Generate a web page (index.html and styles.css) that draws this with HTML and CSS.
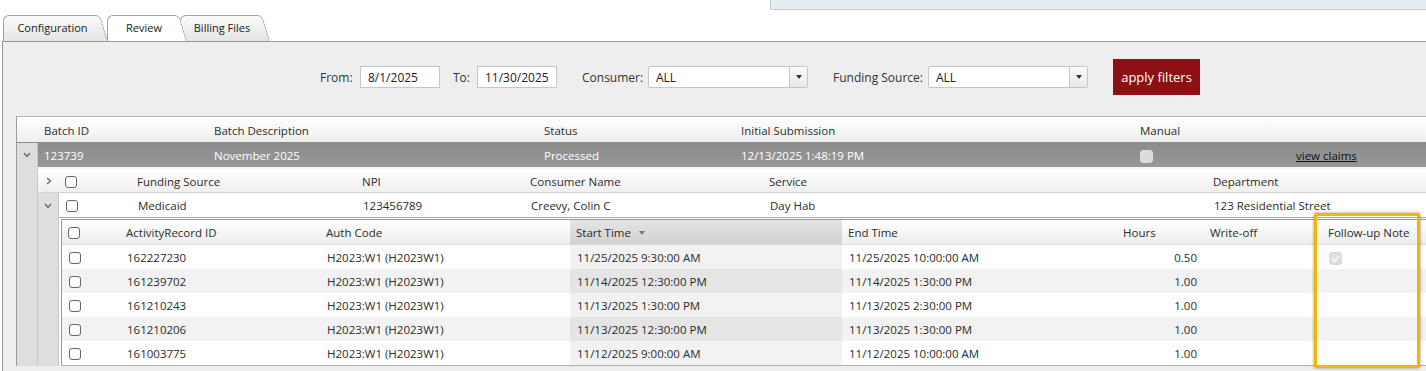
FILE: index.html
```html
<!DOCTYPE html>
<html lang="en">
<head>
    <meta charset="UTF-8">
    <meta name="viewport" content="width=device-width, initial-scale=1.0">
    <title>Billing - Review</title>
    <link rel="stylesheet" href="styles.css">
</head>
<body>
    <div class="top-strip">
        <div class="notice-box"></div>
    </div>

    <div class="tabstrip">
        <div class="tab tab-config"><span>Configuration</span></div>
        <div class="tab tab-review active"><span>Review</span></div>
        <div class="tab tab-billing"><span>Billing Files</span></div>
    </div>

    <div class="panel">
        <div class="filters">
            <label class="filter-label label-from">From:</label>
            <input class="text-input" type="text" value="8/1/2025">
            <label class="filter-label label-to">To:</label>
            <input class="text-input" type="text" value="11/30/2025">
            <label class="filter-label label-consumer">Consumer:</label>
            <div class="dropdown"><span class="value">ALL</span><span class="arrow"></span></div>
            <label class="filter-label label-funding">Funding Source:</label>
            <div class="dropdown"><span class="value">ALL</span><span class="arrow"></span></div>
            <button class="apply-btn" type="button">apply filters</button>
        </div>

        <div class="grid">
            <table class="batch-table">
                <colgroup>
                    <col style="width:21px"><col style="width:170px"><col style="width:330px"><col style="width:197px">
                    <col style="width:399px"><col style="width:156px"><col style="width:146px">
                </colgroup>
                <thead>
                    <tr>
                        <th></th>
                        <th>Batch ID</th>
                        <th>Batch Description</th>
                        <th>Status</th>
                        <th>Initial Submission</th>
                        <th>Manual</th>
                        <th></th>
                    </tr>
                </thead>
                <tbody>
                    <tr class="batch-row">
                        <td class="hier"><svg class="chev" width="8" height="6" viewBox="0 0 8 6"><polyline points="1,1 4,4.5 7,1"/></svg></td>
                        <td>123739</td>
                        <td>November 2025</td>
                        <td>Processed</td>
                        <td>12/13/2025 1:48:19 PM</td>
                        <td><span class="cb cb-disabled"></span></td>
                        <td><a class="view-link" href="#">view claims</a></td>
                    </tr>
                    <tr class="detail-row">
                        <td class="hier"></td>
                        <td colspan="6" class="detail-cell">
                            <table class="source-table">
                                <colgroup>
                                    <col style="width:21px"><col style="width:72px"><col style="width:225px"><col style="width:168px">
                                    <col style="width:239px"><col style="width:444px"><col style="width:230px">
                                </colgroup>
                                <thead>
                                    <tr>
                                        <th class="hier-head"><svg class="chev" width="6" height="8" viewBox="0 0 6 8"><polyline points="1,1 4.5,4 1,7"/></svg></th>
                                        <th><span class="cb"></span></th>
                                        <th>Funding Source</th>
                                        <th>NPI</th>
                                        <th>Consumer Name</th>
                                        <th>Service</th>
                                        <th>Department</th>
                                    </tr>
                                </thead>
                                <tbody>
                                    <tr class="source-row">
                                        <td class="hier"><svg class="chev" width="8" height="6" viewBox="0 0 8 6"><polyline points="1,1 4,4.5 7,1"/></svg></td>
                                        <td><span class="cb"></span></td>
                                        <td>Medicaid</td>
                                        <td>123456789</td>
                                        <td>Creevy, Colin C</td>
                                        <td>Day Hab</td>
                                        <td>123 Residential Street</td>
                                    </tr>
                                    <tr class="detail-row">
                                        <td class="hier"></td>
                                        <td colspan="6" class="detail-cell inner">
                                            <div class="records">
                                                <table class="records-table">
                                                    <colgroup>
                                                        <col style="width:58px"><col style="width:200px"><col style="width:250px"><col style="width:272px">
                                                        <col style="width:275px"><col style="width:87px"><col style="width:118px"><col style="width:115px">
                                                    </colgroup>
                                                    <thead>
                                                        <tr>
                                                            <th><span class="cb"></span></th>
                                                            <th>ActivityRecord ID</th>
                                                            <th>Auth Code</th>
                                                            <th class="sorted">Start Time <span class="sort-arrow"></span></th>
                                                            <th>End Time</th>
                                                            <th>Hours</th>
                                                            <th>Write-off</th>
                                                            <th>Follow-up Note</th>
                                                        </tr>
                                                    </thead>
                                                    <tbody>
                                                        <tr>
                                                            <td><span class="cb"></span></td>
                                                            <td>162227230</td>
                                                            <td>H2023:W1 (H2023W1)</td>
                                                            <td class="sorted">11/25/2025 9:30:00 AM</td>
                                                            <td>11/25/2025 10:00:00 AM</td>
                                                            <td class="num">0.50</td>
                                                            <td></td>
                                                            <td><span class="cb cb-checked"><svg width="9" height="8" viewBox="0 0 9 8"><polyline points="1,4 3.5,6.5 8,1"/></svg></span></td>
                                                        </tr>
                                                        <tr class="alt">
                                                            <td><span class="cb"></span></td>
                                                            <td>161239702</td>
                                                            <td>H2023:W1 (H2023W1)</td>
                                                            <td class="sorted">11/14/2025 12:30:00 PM</td>
                                                            <td>11/14/2025 1:30:00 PM</td>
                                                            <td class="num">1.00</td>
                                                            <td></td>
                                                            <td></td>
                                                        </tr>
                                                        <tr>
                                                            <td><span class="cb"></span></td>
                                                            <td>161210243</td>
                                                            <td>H2023:W1 (H2023W1)</td>
                                                            <td class="sorted">11/13/2025 1:30:00 PM</td>
                                                            <td>11/13/2025 2:30:00 PM</td>
                                                            <td class="num">1.00</td>
                                                            <td></td>
                                                            <td></td>
                                                        </tr>
                                                        <tr class="alt">
                                                            <td><span class="cb"></span></td>
                                                            <td>161210206</td>
                                                            <td>H2023:W1 (H2023W1)</td>
                                                            <td class="sorted">11/13/2025 12:30:00 PM</td>
                                                            <td>11/13/2025 1:30:00 PM</td>
                                                            <td class="num">1.00</td>
                                                            <td></td>
                                                            <td></td>
                                                        </tr>
                                                        <tr>
                                                            <td><span class="cb"></span></td>
                                                            <td>161003775</td>
                                                            <td>H2023:W1 (H2023W1)</td>
                                                            <td class="sorted">11/12/2025 9:00:00 AM</td>
                                                            <td>11/12/2025 10:00:00 AM</td>
                                                            <td class="num">1.00</td>
                                                            <td></td>
                                                            <td></td>
                                                        </tr>
                                                    </tbody>
                                                </table>
                                                <!-- highlight around the follow-up column -->
                                                <div class="column-highlight"></div>
                                            </div>
                                        </td>
                                    </tr>
                                </tbody>
                            </table>
                        </td>
                    </tr>
                </tbody>
            </table>
        </div>
    </div>
</body>
</html>
```

FILE: styles.css
```css
:root {
    --line: #a3a3a3;
    --hier-bg: #dedede;
    --text: #2b2b2b;
    --alt-row: #f2f2f2;
    --brand-red: #8e1015;
}

body {
    margin: 0;
    background: #fff;
    color: var(--text);
    font-family: "Open Sans", "Noto Sans", sans-serif;
    font-size: 11.5px;
    overflow: hidden;
}

/* ---------- top strip + tabs ---------- */

.top-strip {
    height: 15px;
    display: flex;
    justify-content: flex-end;
}

.notice-box {
    width: 655px;
    height: 9px;
    background: #e4eef0;
    border-left: 1px solid #c9c9c9;
    border-bottom: 1px solid #c9c9c9;
}

.tabstrip {
    display: flex;
    align-items: flex-end;
    height: 26px;
    padding-left: 3px;
}

.tab {
    position: relative;
    z-index: 1;
    height: 26px;
    line-height: 26px;
    box-sizing: border-box;
    padding-right: 6px;
    text-align: center;
    font-size: 11px;
    color: #222;
}

.tab span {
    position: relative;
    z-index: 1;
}

.tab::before {
    content: "";
    position: absolute;
    left: 0;
    top: 0;
    bottom: 0;
    right: 14px;
    border: 1px solid var(--line);
    border-width: 1px 0 0 1px;
    border-radius: 6px 0 0 0;
    background: linear-gradient(#fbfbfb, #e4e4e4);
}

.tab::after {
    content: "";
    position: absolute;
    top: 0;
    bottom: 0;
    right: 0;
    width: 20px;
    border: 1px solid var(--line);
    border-width: 1px 1px 0 0;
    border-radius: 0 5px 0 0;
    background: linear-gradient(#fbfbfb, #e4e4e4);
    transform: skewX(17deg);
    transform-origin: 0 100%;
}

.tab.active {
    z-index: 2;
}

.tab.active::before,
.tab.active::after {
    background: #fff;
}

.tab-config { width: 105px; }
.tab-review { width: 80px; margin-left: -1px; }
.tab-billing { width: 90px; margin-left: -7px; }

/* ---------- panel + filters ---------- */

.panel {
    margin-left: 2px;
    height: 330px;
    border-top: 1px solid #999;
    border-left: 1px solid #999;
    background: #eee;
    overflow: hidden;
}

.filters {
    display: flex;
    align-items: center;
    height: 36px;
    margin-top: 17px;
    padding-left: 317px;
    font-size: 12px;
}

.filter-label {
    flex: none;
    color: #333;
}

.label-from { width: 40px; }
.label-to { width: 24px; margin-left: 13px; }
.label-consumer { width: 66px; margin-left: 25px; }
.label-funding { width: 95px; margin-left: 25px; }

.text-input {
    width: 80px;
    height: 22px;
    box-sizing: border-box;
    padding: 0 7px;
    border: 1px solid #c6c6c6;
    background: #fff;
    color: #222;
    font: inherit;
    outline: none;
}

.dropdown {
    display: flex;
    width: 160px;
    height: 22px;
    box-sizing: border-box;
    border: 1px solid #c6c6c6;
    border-radius: 2px;
    background: #fff;
}

.dropdown .value {
    flex: 1;
    padding-left: 7px;
    line-height: 21px;
    color: #222;
}

.dropdown .arrow {
    width: 17px;
    display: flex;
    align-items: center;
    justify-content: center;
    border-left: 1px solid #c6c6c6;
    background: linear-gradient(#fafafa, #e9e9e9);
}

.dropdown .arrow::after {
    content: "";
    border-left: 3.5px solid transparent;
    border-right: 3.5px solid transparent;
    border-top: 4px solid #333;
}

.apply-btn {
    margin-left: 25px;
    width: 87px;
    height: 36px;
    padding: 0;
    border: 0;
    background: var(--brand-red);
    color: #fff;
    font-family: inherit;
    font-size: 13px;
    white-space: nowrap;
    cursor: pointer;
}

/* ---------- grids ---------- */

.grid {
    margin: 21px 0 0 13px;
}

table {
    border-collapse: separate;
    border-spacing: 0;
    table-layout: fixed;
}

th, td {
    padding: 0 7px;
    text-align: left;
    font-weight: normal;
    white-space: nowrap;
    overflow: hidden;
}

td.detail-cell {
    overflow: visible;
}

.batch-table {
    width: 1420px;
    border-top: 1px solid #b8b8b8;
    border-left: 1px solid #9c9c9c;
}

.batch-table th,
.batch-row td {
    padding-left: 6px;
}

.batch-table > thead th {
    height: 24px;
    padding-top: 1px;
    background: linear-gradient(#fff, #efefef);
    border-bottom: 1px solid #8a8a8a;
}

.batch-row td {
    height: 24px;
    background: linear-gradient(#8c8c8c, #989898);
    color: #fff;
}

.hier,
.batch-row td.hier {
    padding: 0;
    text-align: center;
}

.batch-row td.hier,
.detail-row > td.hier,
.source-row td.hier {
    background: var(--hier-bg);
    border-right: 1px solid #c8c8c8;
}

.chev {
    display: block;
    margin: 0 auto;
    fill: none;
    stroke: #6a6a6a;
    stroke-width: 1.4;
}

.view-link {
    color: #111;
    text-decoration: underline;
}

.detail-cell {
    padding: 3px 0 0 0;
    background: #f8f8f8;
}

.detail-cell.inner {
    padding: 1px 0 0 2px;
    background: #fff;
}

.source-table {
    width: 1398px;
}

.source-table > thead th {
    height: 22px;
    background: linear-gradient(#fff, #efefef);
    border-bottom: 1px solid #d3d3d3;
}

.source-table .hier-head {
    padding: 0;
}

.source-row td {
    height: 24px;
    background: #fff;
    border-bottom: 1px solid #a8a8a8;
}

.source-row td.hier {
    border-bottom: 0;
    height: 25px;
}

.records {
    position: relative;
    border-top: 1px solid #9a9a9a;
    border-left: 1px solid #9a9a9a;
    border-bottom: 1px solid #b0b0b0;
}

.records-table {
    width: 1375px;
}

.records-table th {
    height: 24px;
    background: linear-gradient(#fff, #ededed);
    border-bottom: 1px solid #dadada;
}

.records-table th.sorted {
    background: linear-gradient(#e4e4e4, #d2d2d2);
}

.sort-arrow {
    display: inline-block;
    margin-left: 5px;
    vertical-align: middle;
    border-left: 3.5px solid transparent;
    border-right: 3.5px solid transparent;
    border-top: 4px solid #777;
}

.records-table td {
    height: 24px;
    background: #fff;
}

.records-table tr.alt td {
    background: var(--alt-row);
}

.records-table td.sorted {
    background: #f2f2f2;
}

.records-table tr.alt td.sorted {
    background: #e5e5e5;
}

.records-table td.num {
    text-align: right;
}

.cb {
    display: inline-block;
    width: 10px;
    height: 10px;
    border: 1px solid #666;
    border-radius: 3px;
    background: #fff;
    vertical-align: middle;
}

.cb-disabled {
    width: 11px;
    height: 11px;
    border-color: #dcdcdc;
    background: #dcdcdc;
}

.cb-checked {
    position: relative;
    width: 11px;
    height: 11px;
    border-color: #d8d8d8;
    background: #dedede;
}

.cb-checked svg {
    position: absolute;
    left: 1px;
    top: 2px;
    fill: none;
    stroke: #f4f4f4;
    stroke-width: 1.8;
}

.column-highlight {
    position: absolute;
    left: 1252px;
    top: -7px;
    width: 100px;
    height: 149px;
    border: 3px solid #f5b400;
    border-radius: 2px;
    box-shadow: 0 0 3px rgba(0, 0, 0, 0.45);
    pointer-events: none;
}
```
